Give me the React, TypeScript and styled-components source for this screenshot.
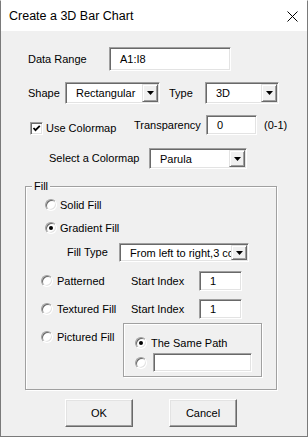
import React from 'react'
import styled, { createGlobalStyle, css } from 'styled-components'

const GlobalStyle = createGlobalStyle`
  html, body {
    margin: 0;
    padding: 0;
    background: #f0f0f0;
  }
  * { box-sizing: border-box; }
`

const sunken = css`
  background: #fff;
  border: 1px solid;
  border-color: #a0a0a0 #fff #fff #a0a0a0;
  box-shadow: inset 1px 1px 0 #696969, inset -1px -1px 0 #e3e3e3;
`

const etched = css`
  border: 1px solid #a0a0a0;
  box-shadow: inset 1px 1px 0 #fff, 1px 1px 0 #fff;
`

const Dialog = styled.div`
  width: 308px;
  height: 437px;
  display: flex;
  flex-direction: column;
  background: #f0f0f0;
  border: 1px solid #7a7a7a;
  border-top-color: #fff;
  font-family: "Liberation Sans", Arial, sans-serif;
  font-size: 11px;
  color: #000;
  overflow: hidden;
`

const TitleBar = styled.div`
  flex: none;
  height: 30px;
  display: flex;
  align-items: center;
  justify-content: space-between;
  padding: 0 9px 0 8px;
  background: #fff;
`

const Title = styled.span`
  font-size: 12.5px;
`

type RowProps = { $top: number; $left: number; $h: number; $align?: string }
const Row = styled.div<RowProps>`
  flex: none;
  display: flex;
  align-items: ${({ $align }) => $align || 'center'};
  height: ${({ $h }) => $h}px;
  margin-top: ${({ $top }) => $top}px;
  padding-left: ${({ $left }) => $left}px;
`

const Label = styled.span<{ $w?: number; $ml?: number }>`
  flex: none;
  width: ${({ $w }) => ($w ? `${$w}px` : 'auto')};
  margin-left: ${({ $ml }) => $ml || 0}px;
  white-space: nowrap;
  line-height: 13px;
`

type BoxProps = { $w: number; $h: number }
const TextBox = styled.div<BoxProps>`
  ${sunken}
  flex: none;
  width: ${({ $w }) => $w}px;
  height: ${({ $h }) => $h}px;
  display: flex;
  align-items: center;
  padding-left: 10px;
  white-space: nowrap;
  overflow: hidden;
`

const Combo = styled.div<BoxProps>`
  ${sunken}
  flex: none;
  width: ${({ $w }) => $w}px;
  height: ${({ $h }) => $h}px;
  display: flex;
  padding: 1px;
`

const ComboValue = styled.span`
  flex: 1;
  min-width: 0;
  display: flex;
  align-items: center;
  padding-left: 9px;
  white-space: nowrap;
  overflow: hidden;
`

const DropButton = styled.span`
  flex: none;
  width: 16px;
  display: flex;
  align-items: center;
  justify-content: center;
  background: #f0f0f0;
  border: 1px solid;
  border-color: #e3e3e3 #696969 #696969 #e3e3e3;
  box-shadow: inset 1px 1px 0 #fff, inset -1px -1px 0 #a0a0a0;
`

const Choice = styled.label<{ $w?: number; $gap?: number; $mt?: number }>`
  flex: none;
  display: flex;
  align-items: center;
  height: 14px;
  gap: ${({ $gap }) => $gap ?? 4}px;
  width: ${({ $w }) => ($w ? `${$w}px` : 'auto')};
  margin-top: ${({ $mt }) => $mt || 0}px;
  white-space: nowrap;
`

const CheckChoice = styled(Choice)`
  align-self: flex-end;
  height: 13px;
`

const CheckBox = styled.span`
  ${sunken}
  flex: none;
  width: 13px;
  height: 13px;
  display: flex;
  align-items: center;
  justify-content: center;
`

const Radio = styled.span<{ $on?: boolean }>`
  ${sunken}
  flex: none;
  width: 12px;
  height: 12px;
  border-radius: 50%;
  display: flex;
  align-items: center;
  justify-content: center;

  &::after {
    content: '';
    display: ${({ $on }) => ($on ? 'block' : 'none')};
    width: 4px;
    height: 4px;
    border-radius: 50%;
    background: #000;
  }
`

const GroupBox = styled.fieldset`
  ${etched}
  flex: none;
  width: 252px;
  min-width: 0;
  margin: 11px 0 0 24px;
  padding: 0 0 12px 0;
`

const Caption = styled.legend`
  margin-left: 6px;
  padding: 0 2px;
  line-height: 12px;
  background: #f0f0f0;
`

const InnerGroup = styled.div`
  ${etched}
  flex: none;
  width: 139px;
  height: 54px;
  display: flex;
  flex-direction: column;
`

const ButtonBar = styled.div`
  flex: none;
  display: flex;
  gap: 36px;
  margin-top: 9px;
  padding-left: 64px;
`

const PushButton = styled.button`
  width: 68px;
  height: 28px;
  padding: 0;
  font: inherit;
  color: #000;
  background: #f0f0f0;
  border: 1px solid;
  border-color: #fff #696969 #696969 #fff;
  box-shadow: inset -1px -1px 0 #a0a0a0, inset 1px 1px 0 #e3e3e3;
`

function Arrow () {
  return (
    <svg width="7" height="4" viewBox="0 0 7 4">
      <path d="M0 0h7L3.5 4z" fill="#000" />
    </svg>
  )
}

function Select ({ w, h, value }: { w: number; h: number; value: string }) {
  return (
    <Combo $w={w} $h={h}>
      <ComboValue>{value}</ComboValue>
      <DropButton><Arrow /></DropButton>
    </Combo>
  )
}

function App () {
  return (
    <Dialog>
      <GlobalStyle />
      <TitleBar>
        <Title>Create a 3D Bar Chart</Title>
        <svg width="11" height="11" viewBox="0 0 11 11">
          <path d="M0.5 0.5l10 10M10.5 0.5l-10 10" stroke="#000" strokeWidth="1" />
        </svg>
      </TitleBar>

      <Row $top={16} $left={27} $h={24}>
        <Label $w={81}>Data Range</Label>
        <TextBox $w={122} $h={24}>A1:I8</TextBox>
      </Row>

      <Row $top={11} $left={27} $h={22}>
        <Label $w={37}>Shape</Label>
        <Select w={95} h={22} value="Rectangular" />
        <Label $w={36} $ml={9}>Type</Label>
        <Select w={74} h={22} value="3D" />
      </Row>

      <Row $top={11} $left={29} $h={20}>
        <CheckChoice $w={104} $gap={3}>
          <CheckBox>
            <svg width="9" height="9" viewBox="0 0 9 9">
              <path d="M1.5 4l2 2.2L7.8 1.8" stroke="#000" strokeWidth="1.8" fill="none" />
            </svg>
          </CheckBox>
          <Label>Use Colormap</Label>
        </CheckChoice>
        <Label $w={72}>Transparency</Label>
        <TextBox $w={51} $h={20}>0</TextBox>
        <Label $ml={7}>(0-1)</Label>
      </Row>

      <Row $top={13} $left={48} $h={21}>
        <Label $w={100}>Select a Colormap</Label>
        <Select w={98} h={21} value="Parula" />
      </Row>

      <GroupBox>
        <Caption>Fill</Caption>
        <Row $top={6} $left={19} $h={14}>
          <Choice $gap={3}><Radio /><Label>Solid Fill</Label></Choice>
        </Row>
        <Row $top={9} $left={19} $h={14}>
          <Choice $gap={3}><Radio $on /><Label>Gradient Fill</Label></Choice>
        </Row>
        <Row $top={8} $left={41} $h={19}>
          <Label $w={52}>Fill Type</Label>
          <Select w={130} h={19} value="From left to right,3 colors" />
        </Row>
        <Row $top={9} $left={15} $h={20}>
          <Choice $w={90}><Radio /><Label>Patterned</Label></Choice>
          <Label $w={68}>Start Index</Label>
          <TextBox $w={43} $h={20}>1</TextBox>
        </Row>
        <Row $top={8} $left={15} $h={20}>
          <Choice $w={90}><Radio /><Label>Textured Fill</Label></Choice>
          <Label $w={68}>Start Index</Label>
          <TextBox $w={43} $h={20}>1</TextBox>
        </Row>
        <Row $top={4} $left={15} $h={54} $align="flex-start">
          <Choice $w={82} $mt={7}><Radio /><Label>Pictured Fill</Label></Choice>
          <InnerGroup>
            <Row $top={12} $left={11} $h={14}>
              <Choice><Radio $on /><Label>The Same Path</Label></Choice>
            </Row>
            <Row $top={3} $left={11} $h={19}>
              <Choice $gap={6}>
                <Radio />
                <TextBox $w={99} $h={19} />
              </Choice>
            </Row>
          </InnerGroup>
        </Row>
      </GroupBox>

      <ButtonBar>
        <PushButton>OK</PushButton>
        <PushButton>Cancel</PushButton>
      </ButtonBar>
    </Dialog>
  )
}

export default App
